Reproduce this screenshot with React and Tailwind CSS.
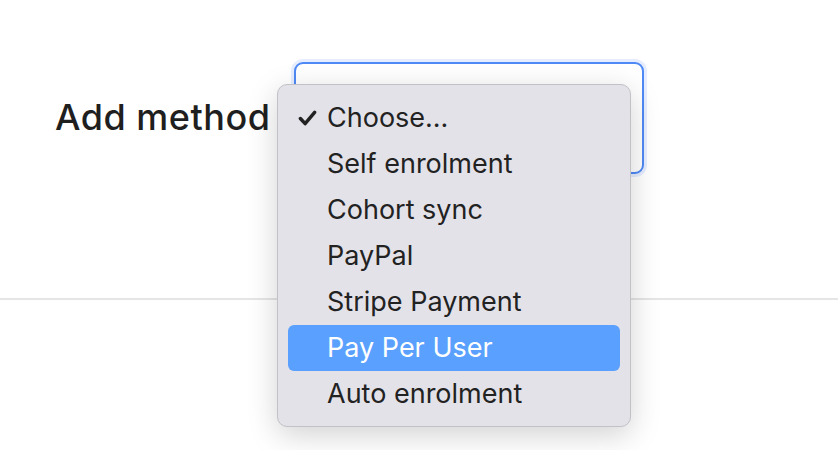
import React from "react";

const options = [
  "Choose...",
  "Self enrolment",
  "Cohort sync",
  "PayPal",
  "Stripe Payment",
  "Pay Per User",
  "Auto enrolment",
];

export default function App() {
  const selected = "Choose...";
  const hovered = "Pay Per User";

  return (
    <div className="relative w-[838px] h-[450px] bg-white overflow-hidden">
      <div className="flex items-center pl-[55px] pt-[62px]">
        <label
          className="w-[239px] text-[36px] font-[450] text-[#1f1f1f] tracking-[0.5px] -mt-[2px]"
          style={{ fontFamily: "Inter, 'Open Sans', sans-serif" }}
        >
          Add method
        </label>
        <div className="w-[350px] h-[112px] rounded-[9px] border-2 border-[#4f89f5] bg-white shadow-[0_0_0_3px_rgba(79,137,245,0.15)]"></div>
      </div>
      <div className="mt-[124px] h-[2px] bg-[#e5e5e5]"></div>

      {/* native select popup */}
      <div
        className="absolute left-[277px] top-[84px] w-[354px] h-[343px] rounded-[10px] border border-[#c2c1c6] bg-[#e4e2e9] shadow-[0_8px_30px_rgba(0,0,0,0.18)] px-[10px] pt-[10px]"
        style={{ fontFamily: "Inter, Roboto, sans-serif" }}
      >
        {options.map((opt) => (
          <div
            key={opt}
            className={`flex items-center h-[46px] rounded-[6px] text-[27px] ${
              opt === hovered ? "bg-[#5aa0fe] text-white" : "text-[#222]"
            }`}
          >
            <span className="w-[39px] flex justify-end pr-[10px]">
              {opt === selected && (
                <svg
                  viewBox="0 0 20 16"
                  className="w-[19px] h-[16px]"
                  fill="none"
                  stroke="currentColor"
                  strokeWidth="3.6"
                  strokeLinecap="round"
                  strokeLinejoin="round"
                >
                  <path d="M2.5 8.5 L7.5 14 L17.5 2" />
                </svg>
              )}
            </span>
            <span>{opt}</span>
          </div>
        ))}
      </div>
    </div>
  );
}
